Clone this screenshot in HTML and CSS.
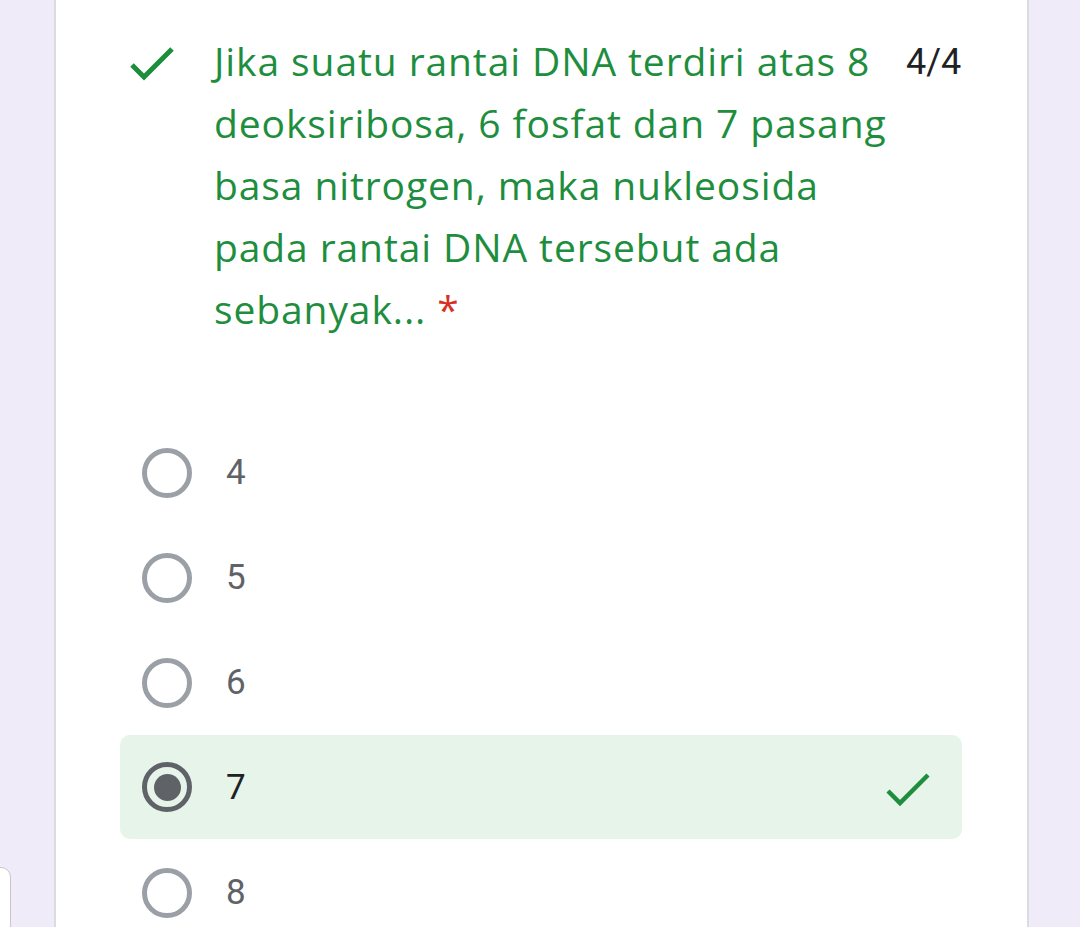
FILE: index.html
```html
<!DOCTYPE html>
<html>
<head>
<meta charset="utf-8">
<link rel="stylesheet" href="styles.css">
</head>
<body>
<div class="page">
  <div class="side-tab"></div>
  <div class="card">
    <div class="question">
      <svg class="q-check" width="48" height="48" viewBox="0 0 48 48"><path d="M4 24 L16 36 L44 8" fill="none" stroke="#1e8e3e" stroke-width="5"/></svg>
      <div class="q-text">Jika suatu rantai DNA terdiri atas 8<br>deoksiribosa, 6 fosfat dan 7 pasang<br>basa nitrogen, maka nukleosida<br>pada rantai DNA tersebut ada<br>sebanyak... <span class="req">*</span></div>
      <div class="score">4/4</div>
    </div>
    <div class="options">
      <div class="option"><span class="radio"></span><span class="label">4</span></div>
      <div class="option"><span class="radio"></span><span class="label">5</span></div>
      <div class="option"><span class="radio"></span><span class="label">6</span></div>
      <div class="option selected"><span class="radio on"></span><span class="label">7</span>
        <svg class="opt-check" width="48" height="40" viewBox="0 0 48 40"><path d="M3 20 L15 32 L43 4" fill="none" stroke="#1e8e3e" stroke-width="4.5"/></svg>
      </div>
      <div class="option"><span class="radio"></span><span class="label">8</span></div>
    </div>
  </div>
</div>
</body>
</html>
```
FILE: styles.css
```css
html, body { margin: 0; padding: 0; }
body {
  background: #efebf8;
  height: 927px;
  overflow: hidden;
  font-family: Roboto, "Liberation Sans", sans-serif;
}
.page {
  position: relative;
  display: flex;
  height: 927px;
}
.side-tab {
  position: absolute;
  left: -20px;
  top: 867px;
  width: 29px;
  height: 100px;
  background: #fff;
  border: 1px solid #c8c8cc;
  border-radius: 10px;
}
.card {
  margin-left: 54px;
  width: 971px;
  background: #fff;
  border-left: 2px solid #dadce0;
  border-right: 2px solid #dadce0;
  padding-top: 30px;
}
.question {
  display: flex;
  align-items: flex-start;
}
.q-check {
  margin-left: 72px;
  margin-top: 11px;
  flex: none;
}
.q-text {
  margin-left: 38px;
  width: 680px;
  color: #1e8e3e;
  font-family: "Open Sans", Roboto, sans-serif;
  font-size: 39px;
  letter-spacing: 0.9px;
  line-height: 62px;
  white-space: nowrap;
}
.req { color: #d93025; }
.score {
  margin-left: 12px;
  margin-top: 1px;
  color: #202124;
  font-size: 36px;
  line-height: 62px;
}
.options {
  margin-top: 80px;
  margin-left: 64px;
  width: 842px;
  display: flex;
  flex-direction: column;
}
.option {
  height: 105px;
  display: flex;
  align-items: center;
  padding-left: 22px;
  border-radius: 10px;
}
.option.selected {
  background: #e6f4ea;
  height: 104px;
  margin-bottom: 1px;
}
.radio {
  width: 50px;
  height: 50px;
  border: 5px solid #9aa0a6;
  border-radius: 50%;
  box-sizing: border-box;
  flex: none;
  position: relative;
}
.radio.on { border-color: #5f6368; }
.radio.on::after {
  content: "";
  position: absolute;
  left: 6.5px;
  top: 6.5px;
  width: 27px;
  height: 27px;
  border-radius: 50%;
  background: #5f6368;
}
.label {
  margin-left: 34px;
  font-size: 35px;
  color: #5f6368;
}
.selected .label { color: #202124; }
.opt-check {
  margin-left: auto;
  margin-right: 29px;
  margin-top: 8px;
}
```
